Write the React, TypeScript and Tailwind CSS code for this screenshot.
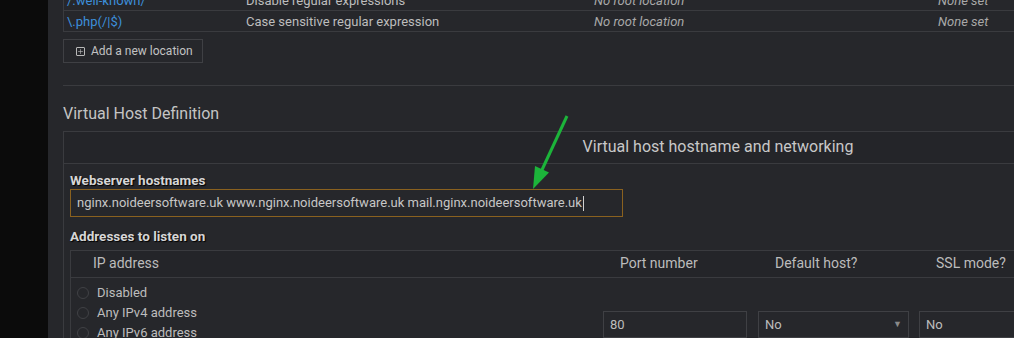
import { Plus } from "lucide-react"

const font = { fontFamily: "Roboto, 'Liberation Sans', sans-serif" }

function LocationRow({ path, kind, root, extra }: { path: string; kind: string; root: string; extra: string }) {
  return (
    <div className="flex h-[21px] items-center border-b border-[#3a3b3f] pt-px text-[13px]">
      <div className="w-[178px] pl-[3px] text-[#3d8fda]">{path}</div>
      <div className="w-[348px] pl-[4px] text-[#bdbdbd]">{kind}</div>
      <div className="w-[345px] pl-[4px] italic text-[#a9a9a9]">{root}</div>
      <div className="flex-1 pl-[3px] italic text-[#a9a9a9]">{extra}</div>
    </div>
  )
}

function Radio({ label }: { label: string }) {
  return (
    <div className="flex h-[20px] items-center">
      <span className="mr-[8px] h-[12px] w-[12px] rounded-full border border-[#404145]" />
      <span>{label}</span>
    </div>
  )
}

function GreenArrow() {
  return (
    <svg className="pointer-events-none absolute left-0 top-0" width="1014" height="338">
      <line x1="567" y1="116" x2="541" y2="172" stroke="#1cb43a" strokeWidth="3" />
      <polygon points="535,166 549,172.5 533,189" fill="#1cb43a" />
    </svg>
  )
}

export default function App() {
  return (
    <div className="relative flex h-[338px] w-[1014px] overflow-hidden bg-[#26272b]" style={font}>
      <div className="w-[48px] shrink-0 bg-[#0b0b0b]" />
      <div className="min-w-0 flex-1 pl-[15px] text-[#bdbdbd]">
        <div className="-mt-[10px] w-[1200px] border-l border-[#3a3b3f]">
          <LocationRow path="/.well-known/" kind="Disable regular expressions" root="No root location" extra="None set" />
          <LocationRow path="\.php(/|$)" kind="Case sensitive regular expression" root="No root location" extra="None set" />
        </div>

        <div className="mt-[7px] flex h-[24px] w-[140px] items-center whitespace-nowrap border border-[#3f4044] pl-[12px] text-[12px] text-[#c2c2c2]">
          <span className="mr-[6px] flex h-[9px] w-[9px] shrink-0 items-center justify-center rounded-[1px] border border-[#b8b8b8]">
            <Plus size={7} strokeWidth={2} />
          </span>
          Add a new location
        </div>

        <div className="mt-[22px] h-px w-[1200px] bg-[#3a3b3f]" />

        <div className="mt-[19px] text-[16px] leading-[18px] text-[#c4c4c4]">Virtual Host Definition</div>

        <div className="mt-[8px] w-[1310px] border border-[#3a3b3f]">
          <div className="flex h-[32px] items-center justify-center border-b border-[#3a3b3f] bg-[#242529] pb-px text-[16px] text-[#c8c8c8]">
            Virtual host hostname and networking
          </div>
          <div className="pl-[6px] pt-[8px]">
            <div className="mb-px text-[13.5px] font-bold leading-[16px] text-[#d6d6d6] [text-shadow:1px_1px_1px_#000]">
              Webserver hostnames
            </div>
            <div className="flex h-[28px] w-[553px] items-center border border-[#8a611f] pl-[6px] text-[13px] text-[#c6c6c6]">
              nginx.noideersoftware.uk www.nginx.noideersoftware.uk mail.nginx.noideersoftware.uk
              <span className="ml-px h-[15px] w-px bg-[#d0d0d0]" />
            </div>
            <div className="mt-[11px] text-[13.5px] font-bold leading-[16px] text-[#d6d6d6] [text-shadow:1px_1px_1px_#000]">
              Addresses to listen on
            </div>
            <div className="mt-[6px] border border-[#3a3b3f]">
              <div className="flex h-[27px] items-center border-b border-[#3a3b3f] bg-[#242529] pb-px text-[14px] text-[#bcbcbc]">
                <div className="w-[527px] pl-[22px]">IP address</div>
                <div className="w-[155px] pl-[22px]">Port number</div>
                <div className="w-[161px] pl-[22px]">Default host?</div>
                <div className="flex-1 pl-[22px]">SSL mode?</div>
              </div>
              <div className="flex text-[13px] text-[#bdbdbd]">
                <div className="w-[527px] pl-[6px] pt-[5px]">
                  <Radio label="Disabled" />
                  <Radio label="Any IPv4 address" />
                  <Radio label="Any IPv6 address" />
                </div>
                <div className="w-[155px] pl-[5px] pt-[33px]">
                  <div className="flex h-[27px] w-[144px] items-center border border-[#3f4044] pl-[6px]">80</div>
                </div>
                <div className="w-[161px] pl-[5px] pt-[33px]">
                  <div className="flex h-[27px] w-[151px] items-center justify-between border border-[#3f4044] px-[6px]">
                    <span>No</span>
                    <span className="text-[9px] text-[#8a8a8a]">▼</span>
                  </div>
                </div>
                <div className="flex-1 pl-[5px] pt-[33px]">
                  <div className="flex h-[27px] w-[151px] items-center border border-[#3f4044] px-[6px]">No</div>
                </div>
              </div>
            </div>
          </div>
        </div>
      </div>
      <GreenArrow />
    </div>
  )
}
